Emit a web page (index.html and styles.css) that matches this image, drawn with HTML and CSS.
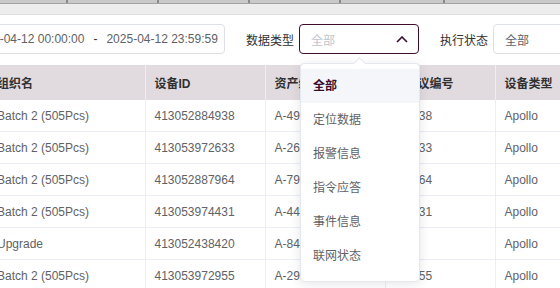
FILE: index.html
```html
<!DOCTYPE html>
<html lang="zh-CN">
  <head>
    <meta charset="UTF-8" />
    <meta name="viewport" content="width=device-width, initial-scale=1.0" />
    <title>数据记录</title>
    <link rel="stylesheet" href="styles.css">
  </head>
  <body>
    <div class="topbar">
      <span class="tick"></span>
      <span class="tick"></span>
      <span class="tick"></span>
      <span class="tick"></span>
      <span class="tick"></span>
    </div>
    <div class="tabbar"></div>

    <div class="filters">
      <div class="range">
        <span class="range-text">2025-04-12 00:00:00</span>
        <span class="range-sep">-</span>
        <span class="range-text">2025-04-12 23:59:59</span>
      </div>
      <span class="filter-label">数据类型</span>
      <div class="select select-open">
        <span class="placeholder">全部</span>
        <svg class="chevron" width="12" height="7" viewBox="0 0 12 7">
          <path d="M1 6 L6 1 L11 6" fill="none" stroke="#3c0d2e" stroke-width="1.6" />
        </svg>
        <div class="dropdown">
          <ul class="options">
            <li class="option selected">全部</li>
            <li class="option">定位数据</li>
            <li class="option">报警信息</li>
            <li class="option">指令应答</li>
            <li class="option">事件信息</li>
            <li class="option">联网状态</li>
          </ul>
        </div>
      </div>
      <span class="filter-label">执行状态</span>
      <div class="select select-status">
        <span class="value">全部</span>
      </div>
    </div>

    <table class="grid">
      <colgroup>
        <col class="c-org" />
        <col class="c-id" />
        <col class="c-asset" />
        <col class="c-proto" />
        <col class="c-type" />
      </colgroup>
      <thead>
        <tr>
          <th>组织名</th>
          <th>设备ID</th>
          <th>资产编号</th>
          <th class="proto">协议编号</th>
          <th>设备类型</th>
        </tr>
      </thead>
      <tbody>
        <tr>
          <td>Batch 2 (505Pcs)</td>
          <td>413052884938</td>
          <td>A-4938</td>
          <td class="proto">0038</td>
          <td>Apollo</td>
        </tr>
        <tr>
          <td>Batch 2 (505Pcs)</td>
          <td>413053972633</td>
          <td>A-2633</td>
          <td class="proto">0033</td>
          <td>Apollo</td>
        </tr>
        <tr>
          <td>Batch 2 (505Pcs)</td>
          <td>413052887964</td>
          <td>A-7964</td>
          <td class="proto">0064</td>
          <td>Apollo</td>
        </tr>
        <tr>
          <td>Batch 2 (505Pcs)</td>
          <td>413053974431</td>
          <td>A-4431</td>
          <td class="proto">0031</td>
          <td>Apollo</td>
        </tr>
        <tr>
          <td>Upgrade</td>
          <td>413052438420</td>
          <td>A-8420</td>
          <td class="proto">-</td>
          <td>Apollo</td>
        </tr>
        <tr>
          <td>Batch 2 (505Pcs)</td>
          <td>413053972955</td>
          <td>A-2955</td>
          <td class="proto">0055</td>
          <td>Apollo</td>
        </tr>
      </tbody>
    </table>
  </body>
</html>
```

FILE: styles.css
```css
html,
body {
  margin: 0;
  overflow: hidden;
  background: #fff;
}
body {
  font-family: "Liberation Sans", "Noto Sans CJK SC", sans-serif;
  font-size: 12px;
  color: #606266;
}
.topbar {
  display: flex;
  height: 3px;
  background: #c9c9c9;
  border-bottom: 1px solid #a3a3a3;
}
.tick {
  width: 2px;
  height: 3px;
  margin-left: 89px;
  background: #8a8a8a;
}
.tick:first-child {
  margin-left: 66px;
}
.tick:last-child {
  margin-left: 102px;
}
.tabbar {
  height: 10px;
  background: #ededed;
  border-bottom: 1px solid #e0e0e0;
}
.filters {
  display: flex;
  align-items: center;
  margin-top: 9px;
  height: 30px;
}
.range {
  display: flex;
  align-items: center;
  box-sizing: border-box;
  width: 265px;
  height: 30px;
  margin-left: -40px;
  padding-left: 12px;
  border: 1px solid #dcdfe6;
  border-radius: 4px;
  flex-shrink: 0;
}
.range-text {
  white-space: nowrap;
  color: #606266;
}
.range-sep {
  width: 22px;
  text-align: center;
  color: #303133;
}
.filter-label {
  margin-left: 21px;
  margin-right: 5px;
  color: #303133;
  white-space: nowrap;
}
.select {
  position: relative;
  display: flex;
  align-items: center;
  box-sizing: border-box;
  width: 120px;
  height: 30px;
  padding: 0 10px 0 11px;
  border: 1px solid #dcdfe6;
  border-radius: 4px;
  flex-shrink: 0;
}
.select-open {
  border-color: #3c0d2e;
}
.placeholder {
  color: #c0c4cc;
}
.chevron {
  margin-left: auto;
}
.select-status {
  width: 100px;
}
.value {
  color: #606266;
}
.dropdown {
  position: absolute;
  top: 38px;
  left: 0;
  z-index: 10;
  box-sizing: border-box;
  width: 120px;
  padding: 5px 0 8px;
  background: #fff;
  border: 1px solid #e4e7ed;
  border-radius: 4px;
  box-shadow: 0 2px 12px rgba(0, 0, 0, 0.1);
}
.dropdown::before {
  content: "";
  position: absolute;
  top: -5px;
  left: 54px;
  width: 8px;
  height: 8px;
  background: #fff;
  border-top: 1px solid #e4e7ed;
  border-left: 1px solid #e4e7ed;
  transform: rotate(45deg);
}
.options {
  list-style: none;
  margin: 0;
  padding: 0;
}
.option {
  height: 34px;
  line-height: 34px;
  padding-left: 12px;
  color: #606266;
  white-space: nowrap;
}
.option.selected {
  background: #f5f6fa;
  color: #3c0d2e;
  font-weight: bold;
}
.grid {
  margin-top: 11px;
  margin-left: -12px;
  border-collapse: collapse;
  table-layout: fixed;
  width: 627px;
}
.c-org {
  width: 157px;
}
.c-id {
  width: 120px;
}
.c-asset {
  width: 120px;
}
.c-proto {
  width: 110px;
}
.c-type {
  width: 120px;
}
th {
  height: 35px;
  padding: 0 9px;
  background: #e1dbe0;
  color: #303133;
  font-weight: bold;
  text-align: left;
  border-right: 1px solid #f0eef0;
  white-space: nowrap;
  overflow: hidden;
}
td {
  height: 31px;
  padding: 0 9px;
  text-align: left;
  border-right: 1px solid #ebeef5;
  border-bottom: 1px solid #ebeef5;
  white-space: nowrap;
  overflow: hidden;
}
.proto {
  padding-left: 20px;
}
```
